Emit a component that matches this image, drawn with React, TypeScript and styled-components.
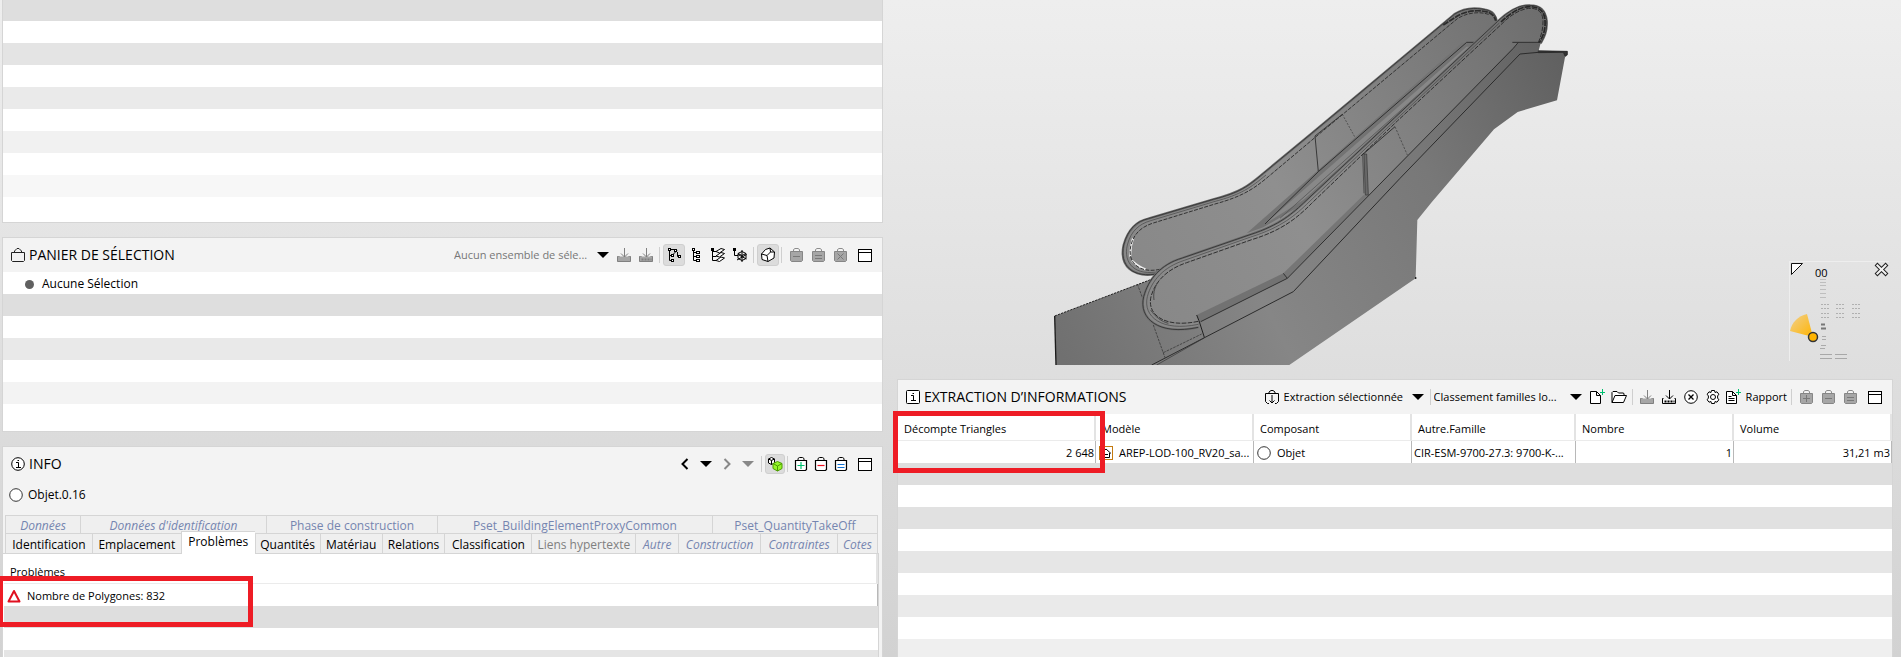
import React from 'react';
import styled, { createGlobalStyle, css } from 'styled-components';

const GlobalStyle = createGlobalStyle`
  *, *::before, *::after { box-sizing: border-box; }
  html, body { margin: 0; padding: 0; }
  body {
    font-family: "Open Sans", "Noto Sans", sans-serif;
    font-size: 11px;
    line-height: 16px;
    color: #000;
  }
  button, select { font: inherit; color: inherit; }
  svg { flex: none; }
`;

/* ---------- Layout ---------- */

const Page = styled.main`
  display: grid;
  grid-template-columns: minmax(0, 881fr) minmax(0, 996fr);
  column-gap: 14px;
  height: 100vh;
  padding: 0 8px 0 2px;
  overflow: hidden;
  background: linear-gradient(#eeeeee 0, #e4e4e4 240px, #dbdbdb 440px, #d2d2d2 657px);
`;

const Column = styled.div`
  display: flex;
  flex-direction: column;
  gap: 14px;
  min-width: 0;
  min-height: 0;
`;

const Panel = styled.section<{ $grow?: boolean; $openTop?: boolean }>`
  position: relative;
  display: flex;
  flex-direction: column;
  flex: ${p => (p.$grow ? '1 0 0' : 'none')};
  min-height: 0;
  border: 1px solid #d5d5d5;
  ${p => p.$openTop && css`border-top: 0;`}
  ${p => p.$grow && css`border-bottom: 0;`}
  background: #f3f3f3;
`;

const PanelHeader = styled.header`
  display: flex;
  align-items: center;
  justify-content: space-between;
  height: 34px;
  flex: none;
  padding: 0 6px 0 7px;
`;

const Title = styled.h2`
  display: flex;
  align-items: center;
  gap: 3px;
  margin: 0;
  font-size: 14px;
  font-weight: 400;
  line-height: 18px;
  white-space: nowrap;
`;

const Stripes = styled.div`
  flex: 1 1 auto;
  min-height: 0;
  overflow: hidden;
  background: #fff;
`;

const Stripe = styled.div<{ $tone: string; $height?: number }>`
  height: ${p => p.$height ?? 22}px;
  background: ${p => p.$tone};
`;

/* ---------- Toolbar ---------- */

const Toolbar = styled.div`
  display: flex;
  align-items: center;
`;

const ToolButton = styled.button<{ $active?: boolean; $compact?: boolean }>`
  display: inline-flex;
  align-items: center;
  justify-content: center;
  gap: 4px;
  min-width: ${p => (p.$compact ? 20 : 22)}px;
  height: ${p => (p.$compact ? 20 : 22)}px;
  padding: 0;
  border: 0;
  border-radius: 3px;
  background: transparent;
  white-space: nowrap;
  ${p => p.$active && css`
    border: 1px solid #cfcfcf;
    background: #dcdcdc;
  `}
`;

const WindowButton = styled(ToolButton)`
  margin-left: 3px;
`;

const ReportButton = styled(ToolButton)`
  padding-right: 2px;
`;

const Divider = styled.span`
  width: 1px;
  height: 16px;
  margin: 0 3px 0 2px;
  background: #cfcfcf;
`;

const Picker = styled.label<{ $muted?: boolean }>`
  display: flex;
  align-items: center;
  gap: 4px;
  padding-right: 4px;
  color: ${p => (p.$muted ? '#777' : '#000')};
`;

const PickerSelect = styled.select<{ $width: number }>`
  width: ${p => p.$width}px;
  padding: 0;
  border: 0;
  outline: 0;
  appearance: none;
  background: transparent;
  font-size: 11px;
  line-height: 16px;
`;

/* ---------- Basket ---------- */

const BasketRow = styled.div`
  display: flex;
  align-items: center;
  gap: 8px;
  height: 22px;
  padding: 2px 0 0 22px;
  background: #fff;
  font-size: 12px;
`;

const Dot = styled.span`
  width: 9px;
  height: 9px;
  border-radius: 50%;
  background: #606060;
`;

/* ---------- Info ---------- */

const ObjectLine = styled.div`
  display: flex;
  align-items: center;
  gap: 4px;
  height: 28px;
  padding-left: 5px;
  font-size: 12px;
`;

const TabArea = styled.div`
  flex: none;
  padding: 6px 4px 0 2px;
`;

const TabRow = styled.div<{ $columns: string }>`
  display: grid;
  grid-template-columns: ${p => p.$columns};
  border-right: 1px solid #d5d5d5;
`;

const Tab = styled.button<{ $active?: boolean; $tone?: 'blue' | 'grey'; $italic?: boolean; $back?: boolean }>`
  height: ${p => (p.$back ? 18 : 20)}px;
  padding: ${p => (p.$back ? '3px 0 0' : '2px 0 0')};
  border: solid #d5d5d5;
  border-width: 1px 0 0 1px;
  background: #efefef;
  color: ${p => (p.$tone === 'blue' ? '#7585b0' : p.$tone === 'grey' ? '#808080' : '#000')};
  font-size: 12px;
  line-height: ${p => (p.$back ? 14 : 16)}px;
  font-style: ${p => (p.$italic ? 'italic' : 'normal')};
  white-space: nowrap;
  ${p => p.$active && css`
    height: 23px;
    margin: -2px 0 -1px;
    padding: 0 0 2px;
    position: relative;
    background: #fff;
  `}
`;

const TabContent = styled.div`
  flex: 1 1 0;
  display: flex;
  flex-direction: column;
  min-height: 0;
  margin-right: 3px;
  padding-left: 1px;
  border: solid #d5d5d5;
  border-width: 1px 1px 0 0;
  background: #fff;
`;

/* ---------- Tables ---------- */

const Table = styled.table`
  width: 100%;
  flex: none;
  border-collapse: separate;
  border-spacing: 0;
  table-layout: fixed;
  background: #fff;
  font-size: 11px;
`;

const HeadCell = styled.th<{ $tall?: boolean }>`
  height: ${p => (p.$tall ? 30 : 27)}px;
  padding: ${p => (p.$tall ? '7px 0 0 6px' : '4px 0 0 6px')};
  border-right: 2px solid #e3e3e3;
  border-bottom: 1px solid #ebebeb;
  text-align: left;
  font-weight: 400;
  line-height: 16px;
  white-space: nowrap;
`;

const Cell = styled.td<{ $end?: boolean }>`
  height: 22px;
  padding: 2px 1px 0 2px;
  border-right: 1px solid #b8b8b8;
  text-align: ${p => (p.$end ? 'right' : 'left')};
  line-height: 16px;
  white-space: nowrap;
  overflow: hidden;
`;

const CellContent = styled.span`
  display: flex;
  align-items: center;
  gap: 5px;
`;

const Callout = styled.div<{ $top: number; $left: number; $width: number; $height: number }>`
  position: absolute;
  z-index: 2;
  top: ${p => p.$top}px;
  left: ${p => p.$left}px;
  width: ${p => p.$width}px;
  height: ${p => p.$height}px;
  border: 5px solid #ee1c25;
  pointer-events: none;
`;

/* ---------- Viewer ---------- */

const Viewer = styled.div`
  position: relative;
  flex: none;
  height: 365px;
  overflow: hidden;
`;

const Model = styled.svg`
  display: block;
  width: 544px;
  height: 365px;
  margin-left: 153px;
`;

const MiniMap = styled.div`
  position: absolute;
  right: 4px;
  top: 261px;
  width: 100px;
  height: 100px;
  border: solid #eeeeee;
  border-width: 1px 0 0 1px;
`;

const Level = styled.span`
  position: absolute;
  left: 25px;
  top: 3px;
  font-size: 11px;
`;

/* ---------- Icons ---------- */

const Svg = ({ w = 16, h = 16, children }: { w?: number; h?: number; children: React.ReactNode }) => (
  <svg width={w} height={h} viewBox={`0 0 ${w} ${h}`} fill="none" stroke="#000" aria-hidden="true">
    {children}
  </svg>
);

const Caret = ({ color = '#000' }: { color?: string }) => (
  <Svg w={12} h={8}><path d="M0 1h12L6 7z" fill={color} stroke="none" /></Svg>
);

const BasketIcon = () => (
  <Svg>
    <path d="M1.5 5.5h13v8l-1 1h-11l-1-1z" stroke="#222" />
    <path d="M4.5 5.5V4L7 1.5h2L11.5 4v1.5" stroke="#222" />
  </Svg>
);

type Glyph = 'plus' | 'minus' | 'equal' | 'cross';
const glyphs: Record<Glyph, string> = {
  plus: 'M8 6v7M4.5 9.5h7',
  minus: 'M4.5 9.5h7',
  equal: 'M4.5 8.5h7M4.5 11.5h7',
  cross: 'M5 6.5l6 6M11 6.5l-6 6',
};

const GreyBag = ({ glyph }: { glyph: Glyph }) => (
  <Svg>
    <path d="M2.5 4.5h12v9l-1 1h-10l-1-1z" fill="#a6a6a6" stroke="#868686" />
    <path d="M5.5 4V2.500l1.500-1h3l1.500 1V4" stroke="#8c8c8c" />
    <g transform="translate(.5 0)"><path d={glyphs[glyph]} stroke="#787878" /></g>
  </Svg>
);

const ColorBag = ({ glyph, color }: { glyph: Glyph; color: string }) => (
  <Svg>
    <path d="M2.500 4.500h11v9l-1 1h-9l-1-1z" fill="#fff" strokeWidth="1.200" />
    <path d="M5 4V2.500l1.500-1h3l1.500 1V4" />
    <path d={glyphs[glyph]} stroke={color} strokeWidth="1.200" />
  </Svg>
);

const Tray = ({ dotted, dark }: { dotted?: boolean; dark?: boolean }) => {
  const c = dark ? '#000' : '#808080';
  return (
    <Svg>
      <path d="M1.500 9v5.500h13V9H12v1.500H4V9z" stroke="none" fill={dark ? 'none' : '#a6a6a6'} />
      <path d="M2.500 9.500h-1v5h13v-5h-1" stroke={c} fill={dark ? 'none' : '#a6a6a6'} />
      <path d="M8.500 1v9M5 6.500L8.500 10 12 6.500" stroke={c} />
      {dotted && <path d="M3.500 12.500h10" stroke={c} strokeWidth="2" strokeDasharray="2 1" />}
    </Svg>
  );
};

const WindowIcon = () => (
  <Svg><rect x="1.5" y="2.500" width="13" height="12" fill="#fff" /><path d="M1.500 5.500h13" /></Svg>
);

const TreeLinked = () => (
  <Svg>
    <path d="M3.500 3v10.500H7M3.500 8.500H6M4 2.500h4M7 7.500l4-4M11.500 5v4.500H13" />
    <path d="M2 1h3v3H2zM5 7h3v3H5zM5 12h3v3H5zM8 2h3v3H8zM12 8h3v3h-3z" fill="#000" stroke="none" />
    <path d="M3 2h1v1H3zM6 8h1v1H6zM6 13h1v1H6zM9 3h1v1H9zM13 9h1v1h-1z" fill="#fff" stroke="none" />
  </Svg>
);
const TreeIcon = () => (
  <Svg>
    <path d="M5.500 3v10.500H9M5.500 9.500H9M5.500 5.500H9" />
    <path d="M4 1h3v3H4zM8 4h4v3H8zM8 8h4v3H8zM8 12h4v3H8z" fill="#000" stroke="none" />
    <path d="M5 2h1v1H5zM9 5h2v1H9zM9 9h2v1H9zM9 13h2v1H9z" fill="#fff" stroke="none" />
  </Svg>
);
const TreeLayers = () => (
  <Svg>
    <path d="M2.500 3v10.500H6M2.500 4.500H6M2.500 9.500H6" />
    <path d="M1 1h3v3H1z" fill="#000" stroke="none" />
    <path d="M6 4.500l5-3 3.500 1-5 3.500zM6 9l5-3.500 3.500 1-5 3.500zM6 13.500l5-3.500 3.500 1-5 3.500z" fill="#fff" />
  </Svg>
);
const TreeCube = () => (
  <Svg>
    <path d="M2.500 3v5.500H6" />
    <path d="M1 1h3v3H1z" fill="#000" stroke="none" />
    <path d="M6 6.500l4-2 4 2v5l-4 2-4-2zM6 6.500l4 2 4-2M10 3v12M5 13l9.500-5.500M14.500 12L6 7.500" />
  </Svg>
);
const CubeIcon = () => (
  <Svg>
    <path d="M5.500 2.500L10 1l4.500 4-.5 6-6 3.500-6-2-.5-5.500z" fill="#fff" />
    <path d="M1.500 7L7 8.500 10.500 5 14.500 5M10 1l.5 4M7 8.500l1 6" />
  </Svg>
);
const ChevronIcon = ({ right, color = '#000' }: { right?: boolean; color?: string }) => (
  <Svg><path d={right ? 'M5.500 3l5 5-5 5' : 'M10.500 3l-5 5 5 5'} stroke={color} strokeWidth="2" /></Svg>
);
const CubePairIcon = () => (
  <Svg>
    <path d="M4.500 1.500l3 1.500v4l-3 1.500-3-1.500V3zM1.500 3l3 1.500 3-1.500M4.500 4.500v4" fill="#fff" />
    <path d="M10.500 5.500l4.500 2v5l-4.500 2.500L6 12.500v-5z" fill="#96f52a" stroke="#4c9c00" />
    <path d="M6 7.500l4.500 2.500L15 7.500M10.500 10v5" stroke="#4c9c00" />
  </Svg>
);
const InfoIcon = ({ square }: { square?: boolean }) => (
  <Svg>
    {square ? <rect x="1.500" y="1.500" width="13" height="13" rx="1" fill="#fff" /> : <circle cx="8" cy="8" r="6.300" fill="#fff" />}
    <path d="M6 6.500h2.500v4.500M6 11.500h5M7.500 4.500h1.500" />
  </Svg>
);
const CircleIcon = () => <Svg><circle cx="8" cy="8" r="6.300" fill="#fff" stroke="#333" /></Svg>;
const WarningIcon = () => (
  <Svg><path d="M8 3l5.500 10.500h-11z" stroke="#e01020" strokeWidth="2" strokeLinejoin="round" fill="#fff" /></Svg>
);
const ModelIcon = () => (
  <Svg>
    <rect x="1.500" y="1.500" width="13" height="13" fill="#fff" stroke="#c47a10" />
    <path d="M3 8.500L8 4l5 4.500M4.500 8v4.500h7V8M6 9.500h4" />
  </Svg>
);
const TakeoffIcon = () => (
  <Svg>
    <path d="M5 14.500H3.500l-2-2v-8h13v8l-2 2H11M5 4V3l2-1.500h2L11 3v1" />
    <path d="M8 6v8M5.500 11.500L8 14l2.500-2.500" />
  </Svg>
);
const NewFileIcon = () => (
  <Svg w={18}>
    <path d="M2.500 2.500h6l4 4v8h-10zM8.500 2.500v4h4" fill="#fff" />
    <path d="M14.500 0v6M12 3.500h5" stroke="#00c070" />
  </Svg>
);
const FolderIcon = () => (
  <Svg>
    <path d="M1 13.500V3.500l1-1h4l1.500 1.500h5l.5 1v2M1 13.500l3-7h11.500l-3 7z" fill="#fff" />
  </Svg>
);
const CrossCircleIcon = () => (
  <Svg><circle cx="8" cy="8" r="6.300" fill="#fff" /><path d="M5.500 5.500l5 5M10.500 5.500l-5 5" strokeWidth="1.300" /></Svg>
);
const GearIcon = () => (
  <Svg>
    <path d="M6.500 1.500h3l.5 2 2-.7 1.800 2.400L12.600 7v2l1.200 1.800L12 13.200l-2-.7-.5 2h-3l-.5-2-2 .7-1.800-2.400L3.400 9V7L2.200 5.200 4 2.800l2 .7z" fill="#fff" />
    <circle cx="8" cy="8" r="2.500" />
  </Svg>
);
const ReportIcon = () => (
  <Svg w={18}>
    <path d="M2.500 2.500h6l4 4v8h-10zM8.500 2.500v4h4" fill="#fff" />
    <path d="M4.500 7.500h3M4.500 9.500h6M4.500 11.500h6" />
    <path d="M14.500 0v6M12 3.500h5" stroke="#00c070" />
  </Svg>
);

/* ---------- Escalator model ---------- */

const backRail = 'M330 820C245 838 208 795 221 735C235 685 260 664 295 656L490 598C570 578 595 558 640 520L785 400L1213 43C1240 25 1275 22 1305 29C1330 34 1337 46 1341 66';
const frontRail = 'M445 982C325 1008 265 955 281 890C295 838 332 793 397 774L600 704C690 675 728 640 768 602L1033 354L1343 64C1373 36 1405 14 1440 16C1475 16 1487 35 1490 62C1492 95 1482 112 1472 130';
const backRailInner = 'M330 808C265 822 230 785 243 735C252 700 275 680 310 669L495 612C575 590 610 568 655 530L798 410L1222 56C1250 38 1290 33 1318 44';
const frontRailInner = 'M445 964C345 985 290 945 303 890C315 845 350 808 410 788L605 719C700 690 745 650 785 610L1043 362L1353 74C1383 43 1415 24 1445 25C1472 27 1479 45 1479 65C1479 90 1472 112 1464 130';

const Escalator = () => (
  <Model viewBox="0 0 1632 1095" fill="none" strokeLinejoin="round" role="img" aria-label="Escalator">
    <defs>
      <linearGradient id="body" gradientUnits="userSpaceOnUse" x1="0" y1="1000" x2="1560" y2="200">
        <stop offset="0" stopColor="#707070" />
        <stop offset=".35" stopColor="#868686" />
        <stop offset=".7" stopColor="#787878" />
        <stop offset="1" stopColor="#606060" />
      </linearGradient>
      <linearGradient id="glass" gradientUnits="userSpaceOnUse" x1="230" y1="800" x2="1480" y2="60">
        <stop offset="0" stopColor="#888888" />
        <stop offset=".35" stopColor="#8f8f8f" />
        <stop offset=".7" stopColor="#7e7e7e" />
        <stop offset="1" stopColor="#6e6e6e" />
      </linearGradient>
    </defs>

    <path d="M14 948L320 832L500 960L480 1095H18z" fill="url(#body)" />
    <path d="M14 948L18 1095" stroke="#1c1c1c" strokeWidth="4" />
    <path d="M14 948L320 832" stroke="#222" strokeWidth="3" strokeDasharray="7 3" />

    <path d={`${backRail}L1350 75L770 640L400 800z`} fill="url(#glass)" />
    <path d="M590 700L1236 128L1278 128L780 600L640 682z" fill="#737373" />
    <path d="M645 672L1250 140L1275 140L760 600z" fill="#888888" />
    <path d="M645 672L805 515L1250 127H1272" stroke="#303030" strokeWidth="3" />
    <path d="M690 655L1275 132" stroke="#4a4a4a" strokeWidth="2" />
    <path d="M795 408L805 515M795 408L877 343" stroke="#383838" strokeWidth="3" />
    <path d="M877 343L915 412" stroke="#383838" strokeWidth="2" strokeDasharray="6 4" />
    <path d="M249 715C242 735 240 752 241 770M246 782C260 795 272 803 287 808" stroke="#f0f0f0" strokeWidth="6" />
    <path d={backRail} stroke="#6a6a6a" strokeWidth="7" />
    <path d={backRail} stroke="#3a3a3a" strokeWidth="3" />
    <path d="M330 814C255 830 219 790 232 735C243 692 268 672 302 662L492 605C573 584 602 563 648 525" stroke="#444" strokeWidth="2" />
    <path d={backRailInner} stroke="#333" strokeWidth="3" strokeDasharray="12 4" />
    <path d="M1180 75L1222 48C1250 31 1290 28 1318 38C1330 44 1334 52 1337 62" stroke="#2c2c2c" strokeWidth="5" strokeDasharray="18 3" />

    <path d={`M445 978L440 945L300 880L${frontRail.slice(1)}L1465 155L1552 154V166L1545 172L1521 301L1403 336L1332 388L1145 607L1102 660L1097 835L718 1095H305L460 1012z`} fill="url(#body)" />
    <path d={`${frontRail}L1405 127L955 585L710 835L440 950z`} fill="url(#glass)" />
    <path d="M440 945L700 820L712 835L452 965z" fill="#727272" />
    <path d="M700 820L940 586L955 585L712 835z" fill="#767676" />
    <path d="M712 835L1390 145L1405 127" stroke="#303030" strokeWidth="3" />
    <path d="M452 965L712 835L700 820M1387 127H1470" stroke="#303030" strokeWidth="3" />
    <path d="M305 1095L730 875L1050 535L1410 162L1465 157" stroke="#2c2c2c" strokeWidth="3" />
    <path d="M320 1095L462 1014" stroke="#333" strokeWidth="2" />
    <path d="M1465 152L1552 154V164L1545 168L1540 157L1465 158z" fill="#333" stroke="#202020" strokeWidth="2" />
    <path d="M440 945L447 962L463 1012" stroke="#202020" strokeWidth="3" />
    <path d="M938 462L942 580" stroke="#333" strokeWidth="2" />
    <path d="M942 462H950L955 585H946z" fill="#696969" stroke="#333" strokeWidth="2" />
    <path d="M940 462L1035 380" stroke="#333" strokeWidth="3" />
    <path d="M1035 380L1072 465" stroke="#383838" strokeWidth="2" strokeDasharray="7 4" />
    <path d="M262 852L278 895M310 975L345 1073M340 1058L455 1002" stroke="#2c2c2c" strokeWidth="2" strokeDasharray="8 3" />
    <path d={frontRail} stroke="#707070" strokeWidth="7" />
    <path d={frontRail} stroke="#3a3a3a" strokeWidth="3" />
    <path d="M445 973C335 996 278 950 292 890C305 841 341 801 403 781L602 711C695 682 737 645 777 606L1039 358L1348 69" stroke="#444" strokeWidth="2" />
    <path d={frontRailInner} stroke="#2e2e2e" strokeWidth="3" strokeDasharray="14 4" />
    <path d="M1353 66C1380 40 1412 19 1442 20C1474 21 1484 40 1485 62C1487 92 1478 110 1468 128" stroke="#262626" strokeWidth="5" strokeDasharray="18 3" />
    <path d="M302 930C315 950 335 965 355 970M312 900C308 875 318 855 325 845" stroke="#4a4a4a" strokeWidth="3" />
    <path d="M1097 831v6" stroke="#222" strokeWidth="4" />
  </Model>
);

const MapDrawing = () => (
  <svg width="100" height="100" viewBox="0 0 100 100" fill="none" aria-hidden="true">
    <path d="M1.500 1.500h11L1.500 12.500z" fill="#fff" stroke="#111" />
    <path d="M86 2l11 11M97 2l-11 11" stroke="#222" strokeWidth="4" />
    <path d="M86.700 2.700l9.600 9.600M96.300 2.700l-9.600 9.600" stroke="#f3f3f3" strokeWidth="2" />
    <path d="M30 17.500h6M30 20.500h6M30 23.500h6M30 27.500h6M30 31.500h6M30 35.500h6" stroke="#bebebe" />
    <path d="M31 42.500h9M46 42.500h9M62 42.500h9M31 46.500h9M46 46.500h9M62 46.500h9M31 51.500h9M46 51.500h9M62 51.500h9M31 55.500h9M46 55.500h9M62 55.500h9" stroke="#b0b0b0" strokeDasharray="2 1" />
    <path d="M31 62.500h4M31 66.500h5" stroke="#777" strokeWidth="2" />
    <path d="M32 74.500h4M32 77.500h4M31 83.500h5M30 86.500h5" stroke="#aaa" />
    <path d="M30 92.500h12M45 92.500h12M30 96.500h12M45 96.500h12" stroke="#a8a8a8" />
    <path d="M23 75L0 69C2 60 8 54 17 52z" fill="url(#beam)" />
    <circle cx="23" cy="75" r="4.500" fill="#ffb400" stroke="#333" strokeWidth="1.500" />
    <defs>
      <linearGradient id="beam" x1="1" y1="1" x2="0" y2="0">
        <stop offset="0" stopColor="#ffb400" /><stop offset="1" stopColor="#f0d090" />
      </linearGradient>
    </defs>
  </svg>
);

const rowTabs: { label: string; tone?: 'blue' | 'grey'; italic?: boolean; active?: boolean }[] = [
  { label: 'Identification' },
  { label: 'Emplacement' },
  { label: 'Problèmes', active: true },
  { label: 'Quantités' },
  { label: 'Matériau' },
  { label: 'Relations' },
  { label: 'Classification' },
  { label: 'Liens hypertexte', tone: 'grey' },
  { label: 'Autre', tone: 'blue', italic: true },
  { label: 'Construction', tone: 'blue', italic: true },
  { label: 'Contraintes', tone: 'blue', italic: true },
  { label: 'Cotes', tone: 'blue', italic: true },
];

const backTabs = [
  { label: 'Données', italic: true },
  { label: "Données d'identification", italic: true },
  { label: 'Phase de construction' },
  { label: 'Pset_BuildingElementProxyCommon' },
  { label: 'Pset_QuantityTakeOff' },
];

export default function App() {
  return (
    <>
      <GlobalStyle />
      <Page>
        <Column>
          <Panel $openTop>
            <Stripe $tone="#dedede" $height={21} />
            {['#fff', '#e4e4e4', '#fff', '#eaeaea', '#fff', '#f1f1f1', '#fff', '#f7f7f7'].map((tone, i) => (
              <Stripe key={i} $tone={tone} />
            ))}
            <Stripe $tone="#fff" $height={25} />
          </Panel>

          <Panel>
            <PanelHeader>
              <Title><BasketIcon />PANIER DE SÉLECTION</Title>
              <Toolbar>
                <Picker $muted>
                  <PickerSelect $width={139} aria-label="Ensemble de sélection">
                    <option>Aucun ensemble de séle...</option>
                  </PickerSelect>
                  <Caret />
                </Picker>
                <ToolButton aria-label="Importer"><Tray /></ToolButton>
                <ToolButton aria-label="Importer tout"><Tray dotted /></ToolButton>
                <Divider />
                <ToolButton $active aria-label="Arborescence liée"><TreeLinked /></ToolButton>
                <ToolButton aria-label="Arborescence"><TreeIcon /></ToolButton>
                <ToolButton aria-label="Couches"><TreeLayers /></ToolButton>
                <ToolButton aria-label="Composants"><TreeCube /></ToolButton>
                <Divider />
                <ToolButton $active aria-label="Vue 3D"><CubeIcon /></ToolButton>
                <Divider />
                <ToolButton aria-label="Retirer"><GreyBag glyph="minus" /></ToolButton>
                <ToolButton aria-label="Définir"><GreyBag glyph="equal" /></ToolButton>
                <ToolButton aria-label="Vider"><GreyBag glyph="cross" /></ToolButton>
                <WindowButton aria-label="Agrandir"><WindowIcon /></WindowButton>
              </Toolbar>
            </PanelHeader>
            <BasketRow><Dot />Aucune Sélection</BasketRow>
            {['#dedede', '#fff', '#e9e9e9', '#fff', '#f3f3f3'].map((tone, i) => (
              <Stripe key={i} $tone={tone} />
            ))}
            <Stripe $tone="#fff" $height={27} />
          </Panel>

          <Panel $grow>
            <PanelHeader>
              <Title><InfoIcon />INFO</Title>
              <Toolbar>
                <ToolButton $compact aria-label="Précédent"><ChevronIcon /></ToolButton>
                <ToolButton aria-label="Historique précédent"><Caret /></ToolButton>
                <ToolButton $compact aria-label="Suivant"><ChevronIcon right color="#888" /></ToolButton>
                <ToolButton aria-label="Historique suivant"><Caret color="#888" /></ToolButton>
                <Divider />
                <ToolButton $compact $active aria-label="Composants liés"><CubePairIcon /></ToolButton>
                <Divider />
                <ToolButton $compact aria-label="Ajouter au panier"><ColorBag glyph="plus" color="#00c070" /></ToolButton>
                <ToolButton $compact aria-label="Retirer du panier"><ColorBag glyph="minus" color="#f01020" /></ToolButton>
                <ToolButton $compact aria-label="Définir le panier"><ColorBag glyph="equal" color="#1070d0" /></ToolButton>
                <WindowButton aria-label="Agrandir"><WindowIcon /></WindowButton>
              </Toolbar>
            </PanelHeader>
            <ObjectLine><CircleIcon />Objet.0.16</ObjectLine>
            <TabArea role="tablist">
              <TabRow $columns="75fr 186fr 171fr 275fr 165fr">
                {backTabs.map(t => (
                  <Tab key={t.label} role="tab" $back $tone="blue" $italic={t.italic}>{t.label}</Tab>
                ))}
              </TabRow>
              <TabRow $columns="87fr 89fr 74fr 65fr 62fr 63fr 87fr 104fr 43fr 82fr 77fr 40fr">
                {rowTabs.map(t => (
                  <Tab key={t.label} role="tab" aria-selected={!!t.active} $active={t.active} $tone={t.tone} $italic={t.italic}>
                    {t.label}
                  </Tab>
                ))}
              </TabRow>
            </TabArea>
            <TabContent>
              <Table>
                <thead><tr><HeadCell $tall>Problèmes</HeadCell></tr></thead>
                <tbody>
                  <tr><Cell><CellContent><WarningIcon />Nombre de Polygones: 832</CellContent></Cell></tr>
                </tbody>
              </Table>
              <Stripes>
                <Stripe $tone="#dedede" />
                <Stripe $tone="#fff" />
                <Stripe $tone="#e5e5e5" />
              </Stripes>
            </TabContent>
            <Callout $top={129} $left={-5} $width={255} $height={51} />
          </Panel>
        </Column>

        <Column>
          <Viewer>
            <Escalator />
            <MiniMap>
              <MapDrawing />
              <Level>00</Level>
            </MiniMap>
          </Viewer>

          <Panel $grow>
            <PanelHeader>
              <Title><InfoIcon square />EXTRACTION D’INFORMATIONS</Title>
              <Toolbar>
                <Picker>
                  <TakeoffIcon />
                  <PickerSelect $width={124} aria-label="Extraction">
                    <option>Extraction sélectionnée</option>
                  </PickerSelect>
                  <Caret />
                </Picker>
                <Divider />
                <Picker>
                  <PickerSelect $width={132} aria-label="Classement">
                    <option>Classement familles lo...</option>
                  </PickerSelect>
                  <Caret />
                </Picker>
                <ToolButton aria-label="Nouveau"><NewFileIcon /></ToolButton>
                <ToolButton aria-label="Ouvrir"><FolderIcon /></ToolButton>
                <Divider />
                <ToolButton aria-label="Extraire"><Tray /></ToolButton>
                <ToolButton aria-label="Extraire tout"><Tray dotted dark /></ToolButton>
                <ToolButton aria-label="Effacer"><CrossCircleIcon /></ToolButton>
                <ToolButton aria-label="Paramètres"><GearIcon /></ToolButton>
                <ReportButton><ReportIcon />Rapport</ReportButton>
                <Divider />
                <ToolButton aria-label="Ajouter"><GreyBag glyph="plus" /></ToolButton>
                <ToolButton aria-label="Retirer"><GreyBag glyph="minus" /></ToolButton>
                <ToolButton aria-label="Définir"><GreyBag glyph="equal" /></ToolButton>
                <WindowButton aria-label="Agrandir"><WindowIcon /></WindowButton>
              </Toolbar>
            </PanelHeader>
            <Table>
              <colgroup>
                <col style={{ width: 198 }} /><col style={{ width: 158 }} /><col style={{ width: 158 }} />
                <col style={{ width: 164 }} /><col style={{ width: 158 }} /><col />
              </colgroup>
              <thead>
                <tr>
                  {['Décompte Triangles', 'Modèle', 'Composant', 'Autre.Famille', 'Nombre', 'Volume'].map(h => (
                    <HeadCell key={h}>{h}</HeadCell>
                  ))}
                </tr>
              </thead>
              <tbody>
                <tr>
                  <Cell $end>2 648</Cell>
                  <Cell><CellContent><ModelIcon />AREP-LOD-100_RV20_sa...</CellContent></Cell>
                  <Cell><CellContent><CircleIcon />Objet</CellContent></Cell>
                  <Cell>CIR-ESM-9700-27.3: 9700-K-...</Cell>
                  <Cell $end>1</Cell>
                  <Cell $end>31,21 m3</Cell>
                </tr>
              </tbody>
            </Table>
            <Stripes>
              {['#dedede', '#fff', '#e1e1e1', '#fff', '#e6e6e6', '#fff', '#eaeaea', '#fff', '#efefef'].map((tone, i) => (
                <Stripe key={i} $tone={tone} />
              ))}
            </Stripes>
            <Callout $top={31} $left={-5} $width={212} $height={62} />
          </Panel>
        </Column>
      </Page>
    </>
  );
}
